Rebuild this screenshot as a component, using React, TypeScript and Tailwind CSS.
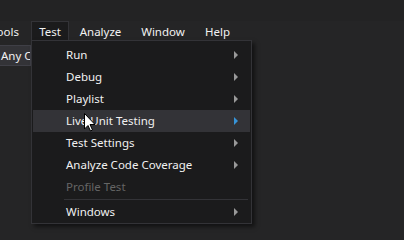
import React from "react";

const items: { label: string; arrow?: boolean; disabled?: boolean; active?: boolean; sep?: boolean }[] = [
  { label: "Run", arrow: true },
  { label: "Debug", arrow: true },
  { label: "Playlist", arrow: true },
  { label: "Live Unit Testing", arrow: true, active: true },
  { label: "Test Settings", arrow: true },
  { label: "Analyze Code Coverage", arrow: true },
  { label: "Profile Test", disabled: true },
  { label: "Windows", arrow: true, sep: true },
];

function Arrow({ active }: { active?: boolean }) {
  return (
    <svg width="4" height="8" viewBox="0 0 4 8" className="shrink-0">
      <path d="M0 0 L4 4 L0 8 Z" fill={active ? "#3794d8" : "#999999"} />
    </svg>
  );
}

export default function App() {
  return (
    <div
      className="relative w-[404px] h-[240px] overflow-hidden bg-[#252526] text-[11.5px] text-[#f1f1f1]"
      style={{ fontFamily: '"Noto Sans", "Open Sans", sans-serif' }}
    >
      <div className="h-[21px] bg-[#232324]" />
      <div className="flex h-[21px] items-center whitespace-nowrap">
        <div className="w-[31px] flex justify-end pr-[12px] overflow-hidden">Tools</div>
        <div className="h-[21px] w-[38px] flex items-center justify-center bg-[#1b1b1c] border-x border-t border-[#333337]">Test</div>
        <div className="w-[63px] flex justify-center">Analyze</div>
        <div className="w-[62px] flex justify-center">Window</div>
        <div className="w-[47px] flex justify-center">Help</div>
      </div>
      <div className="flex mt-[3px]">
        <div className="h-[21px] w-[31px] bg-[#333337] border border-[#3f3f46] border-l-0 flex items-center pl-[1px] whitespace-nowrap overflow-hidden">Any C</div>
      </div>
      <div className="absolute left-[31px] top-[40px] w-[221px] h-[184px] bg-[#1b1b1c] border border-[#333337] shadow-[3px_3px_4px_rgba(0,0,0,0.5)] pt-[3px] px-[1px]">
        {items.map((it) => (
          <div key={it.label}>
            {it.sep && <div className="ml-[31px] mr-[2px] h-px bg-[#333337] my-[1px]" />}
            <div
              className={`flex items-center h-[22px] pl-[33px] pr-[12px] ${it.active ? "bg-[#333337]" : ""} ${it.disabled ? "text-[#656565]" : "text-[#f1f1f1]"}`}
            >
              <span className="flex-1 whitespace-nowrap">{it.label}</span>
              {it.arrow && <Arrow active={it.active} />}
            </div>
          </div>
        ))}
      </div>
      <svg className="absolute left-[84px] top-[113px]" width="12" height="19" viewBox="0 0 12 19">
        <path d="M0.5 0.5 L0.5 16 L4 12.5 L6.5 18 L8.5 17 L6 11.5 L11 11.5 Z" fill="#ffffff" stroke="#000000" strokeWidth="1" />
      </svg>
    </div>
  );
}
